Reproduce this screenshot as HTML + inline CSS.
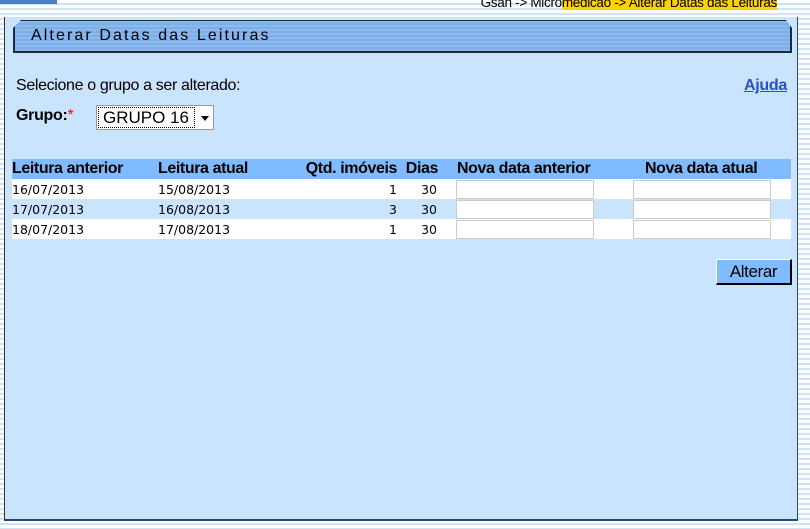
<!DOCTYPE html>
<html><head><meta charset="utf-8"><style>
*{box-sizing:border-box}
body{margin:0;width:810px;height:529px;overflow:hidden;font-family:"Liberation Sans",sans-serif;
background:repeating-linear-gradient(#fff 0 3px,#cfe3f5 3px 5px);position:relative}
.top{position:absolute;left:0;top:0;width:57px;height:4px;background:#4a7fc8}
.bc{position:absolute;right:33px;top:-5px;font-size:13.5px;color:#000;letter-spacing:-0.3px}
.bc span{background:#ffd200}
.panel{position:absolute;left:4px;top:17px;width:794px;height:504px;background:#cbe4fd;border:1px solid #333;border-top:none;border-bottom:2px solid #2c4866;border-right:1px solid #2c4866}
.hdr{position:absolute;left:8px;top:3px;width:779px;height:33px;background:repeating-linear-gradient(#8bb8ee 0 2px,#7eaee6 2px 4px);border:2px solid #1c2a3a;border-top:1px solid #1c2a3a;clip-path:polygon(8px 0,calc(100% - 6px) 0,100% 8px,100% 100%,0 100%,0 8px)}
.hdr div{position:absolute;left:16px;top:6px;font-size:16px;letter-spacing:2.1px;color:#000}
.t1{position:absolute;left:11px;top:60px;font-size:16px;letter-spacing:-0.35px}
.ajuda{position:absolute;left:739px;top:60px;font-size:16px;font-weight:bold;color:#2a50c8;text-decoration:underline;letter-spacing:-0.3px}
.g{position:absolute;left:11px;top:90px;font-size:16px;font-weight:bold;letter-spacing:-0.3px}
.g span{color:red;font-weight:normal}
.sel{position:absolute;left:91px;top:88px;width:118px;height:25px;background:#fff;border:1px solid #999;font-size:17px}
.sel .v{position:absolute;left:1px;top:1px;width:97px;height:21px;border:1px dotted #000;padding-left:4px;line-height:20px}
.sel .a{position:absolute;right:4px;top:10px;border:4px solid transparent;border-top:5px solid #000;border-bottom:none}
table{position:absolute;left:7px;top:142px;width:779px;border-collapse:collapse;font-size:12.5px;font-family:"DejaVu Sans",sans-serif;table-layout:fixed}
th{background:#80bbff;height:20px;font-family:"Liberation Sans",sans-serif;font-size:16px;text-align:left;padding:0;font-weight:bold;letter-spacing:-0.4px;white-space:nowrap}
td{height:20px;padding:0;white-space:nowrap}
tr.w td{background:#fff}tr.b td{background:#cbe4fd}
td input{width:138px;height:19px;border:1px solid #ccc;background:#fff;display:block}
.r{text-align:right}
.btn{position:absolute;left:711px;top:242px;width:76px;height:26px;background:#80bbff;border:1px solid #000;border-top-color:#fff;border-left-color:#fff;border-right:2px solid #000;border-bottom:2px solid #000;font-size:17px;text-align:center;line-height:23px;letter-spacing:-0.4px}
</style></head><body>
<div class="top"></div>
<div class="bc">Gsan -&gt; Micro<span>medicao -&gt; Alterar Datas das Leituras</span></div>
<div class="panel">
<div class="hdr"><div>Alterar Datas das Leituras</div></div>
<div class="t1">Selecione o grupo a ser alterado:</div>
<div class="ajuda">Ajuda</div>
<div class="g">Grupo:<span>*</span></div>
<div class="sel"><div class="v">GRUPO 16</div><div class="a"></div></div>
<table>
<colgroup><col style="width:146px"><col style="width:132px"><col style="width:107px"><col style="width:43px"><col style="width:193px"><col></colgroup>
<tr><th>Leitura anterior</th><th>Leitura atual</th><th class="r">Qtd. imóveis</th><th class="r" style="padding-right:2px">Dias</th><th style="padding-left:17px">Nova data anterior</th><th style="padding-left:12px">Nova data atual</th></tr>
<tr class="w"><td>16/07/2013</td><td>15/08/2013</td><td class="r">1</td><td class="r" style="padding-right:3px">30</td><td style="padding-left:16px"><input></td><td><input></td></tr>
<tr class="b"><td>17/07/2013</td><td>16/08/2013</td><td class="r">3</td><td class="r" style="padding-right:3px">30</td><td style="padding-left:16px"><input></td><td><input></td></tr>
<tr class="w"><td>18/07/2013</td><td>17/08/2013</td><td class="r">1</td><td class="r" style="padding-right:3px">30</td><td style="padding-left:16px"><input></td><td><input></td></tr>
</table>
<div class="btn">Alterar</div>
</div>
</body></html>
